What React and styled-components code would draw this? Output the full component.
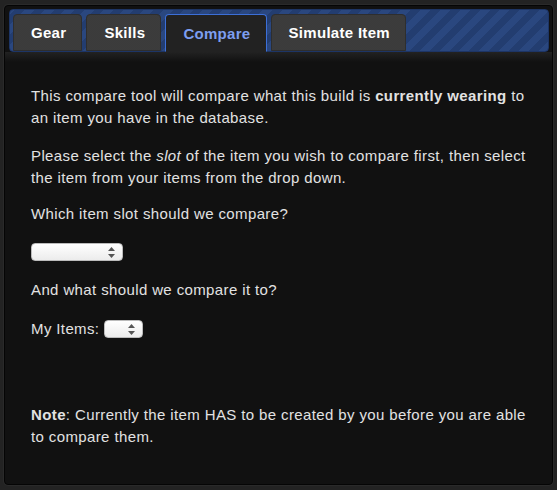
import React from 'react'
import styled, {createGlobalStyle} from 'styled-components'

const GlobalStyle = createGlobalStyle`
	html, body {
		margin: 0;
		padding: 0;
		background: #232323;
	}
	body {
		font-family: "Liberation Sans", Arial, sans-serif;
	}
`

const tabs = ['Gear', 'Skills', 'Compare', 'Simulate Item']

const App = () => {
	const [active, setActive] = React.useState('Compare')
	return (
		<>
			<GlobalStyle />
			<Page>
				<Panel>
					<TabBar>
						{tabs.map(t => (
							<Tab key={t} $active={t === active} onClick={() => setActive(t)}>{t}</Tab>
						))}
					</TabBar>
					<Shade />
					<Content>
						<Para $mb={16}>
							This compare tool will compare what this build is <b>currently wearing</b> to an item you have in the database.
						</Para>
						<Para $mb={14}>
							Please select the <i>slot</i> of the item you wish to compare first, then select the item from your items from the drop down.
						</Para>
						<Para $mb={19}>Which item slot should we compare?</Para>
						<SelectRow>
							<Select $w={92} />
						</SelectRow>
						<Para $mb={17}>And what should we compare it to?</Para>
						<Para $mb={64}>
							My Items: <Select $w={39} />
						</Para>
						<Para $mb={0}>
							<b>Note</b>: Currently the item HAS to be created by you before you are able to compare them.
						</Para>
					</Content>
				</Panel>
			</Page>
		</>
	)
}

const Select = ({$w}) => (
	<SelectBox $w={$w}>
		<svg width="7" height="11" viewBox="0 0 7 11">
			<path d="M3.5 0 L7 4 L0 4 Z" fill="#555" />
			<path d="M3.5 11 L7 7 L0 7 Z" fill="#555" />
		</svg>
	</SelectBox>
)

const Page = styled.div`
	padding: 5px 4px 5px 4px;
	height: 490px;
	box-sizing: border-box;
`

const Panel = styled.div`
	height: 100%;
	box-sizing: border-box;
	background: #111;
	border: 1px solid #050505;
	border-radius: 4px;
	box-shadow: 0 0 0 1px #2a2a2a;
	display: flex;
	flex-direction: column;
	overflow: hidden;
`

const TabBar = styled.div`
	margin: 3px 3px 0 4px;
	height: 43px;
	box-sizing: border-box;
	padding: 4px 3px 0 3px;
	display: flex;
	align-items: flex-end;
	gap: 4px;
	border: 1px solid #1d3566;
	border-radius: 4px;
	background: repeating-linear-gradient(
		-45deg,
		#2a477f 0px,
		#2a477f 7px,
		#233d70 7px,
		#233d70 14px
	);
`

const Tab = styled.div`
	height: ${p => p.$active ? '38px' : '37px'};
	margin-bottom: ${p => p.$active ? '-1px' : '0'};
	box-sizing: border-box;
	padding: 0 15px 0 17px;
	display: flex;
	align-items: center;
	font-size: 15px;
	font-weight: bold;
	letter-spacing: 0.3px;
	cursor: pointer;
	border-radius: 4px 4px 0 0;
	color: ${p => p.$active ? '#7d9ef0' : '#fff'};
	background: ${p => p.$active
		? '#222'
		: 'radial-gradient(circle, #444 0.6px, transparent 0.8px) 0 0 / 2px 2px, #353535'};
	border: ${p => p.$active ? '1px solid #3c6fd8' : '1px solid #2e2e2e'};
	border-bottom: ${p => p.$active ? '1px solid #222' : '1px solid #2e2e2e'};
	position: relative;
	z-index: ${p => p.$active ? 1 : 0};
`

const Shade = styled.div`
	height: 10px;
	background: linear-gradient(#222, #111);
`

const Content = styled.div`
	padding: 23px 22px 0 26px;
	color: #e2e2e2;
	font-size: 15px;
	line-height: 22px;
	letter-spacing: 0.38px;
	flex: 1;
`

const Para = styled.p`
	margin: 0 0 ${p => p.$mb}px 0;
`

const SelectRow = styled.div`
	margin: 0 0 17px 0;
	display: flex;
`

const SelectBox = styled.span`
	display: inline-flex;
	vertical-align: middle;
	align-items: center;
	justify-content: flex-end;
	width: ${p => p.$w}px;
	height: 18px;
	box-sizing: border-box;
	padding-right: 7px;
	border-radius: 4px;
	background: linear-gradient(#ffffff, #ececec);
	border: 1px solid #bbb;
	position: relative;
	top: -1px;
`

export default App
